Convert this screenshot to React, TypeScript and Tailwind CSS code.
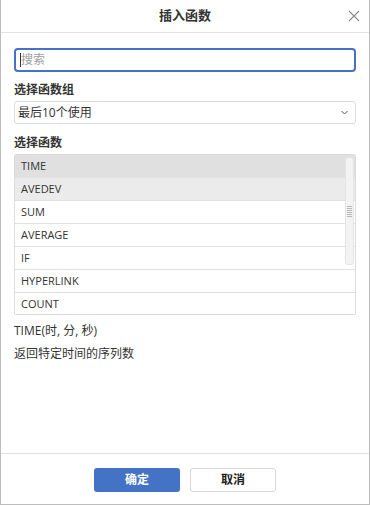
import React from "react";

const items = ["TIME", "AVEDEV", "SUM", "AVERAGE", "IF", "HYPERLINK", "COUNT"];

export default function App() {
  return (
    <div
      className="w-[370px] h-[505px] bg-white border-x border-b border-[#bdbdbd] flex flex-col text-[#333]"
      style={{ fontFamily: '"Open Sans", "Noto Sans", "Noto Sans CJK SC", sans-serif' }}
    >
      <div className="h-[33px] shrink-0 border-b border-[#e3e3e3] flex items-center justify-center relative">
        <span className="text-[13px] font-bold text-[#333]">插入函数</span>
        <svg className="absolute left-[347px] top-[10px]" width="12" height="12" viewBox="0 0 12 12">
          <path d="M1 1L11 11M11 1L1 11" stroke="#8a8a8a" strokeWidth="1.1" />
        </svg>
      </div>
      <div className="flex-1 px-[13px] pt-[15px] flex flex-col">
        <div className="h-[24px] border-2 border-[#4472c4] rounded-[4px] flex items-center pl-[4px]">
          <span className="w-px h-[14px] bg-[#333]" />
          <span className="text-[12px] text-[#a0a0a0]">搜索</span>
        </div>
        <div className="mt-[10px] text-[12px] font-bold leading-[16px]">选择函数组</div>
        <div className="mt-[3px] h-[23px] border border-[#dcdcdc] rounded-[3px] flex items-center justify-between pl-[3px] pr-[7px]">
          <span className="text-[12px]">最后10个使用</span>
          <svg width="7" height="5" viewBox="0 0 7 5">
            <path d="M0.5 1L3.5 4L6.5 1" stroke="#555" strokeWidth="1" fill="none" />
          </svg>
        </div>
        <div className="mt-[11px] text-[12px] font-bold leading-[16px]">选择函数</div>
        <div className="mt-[3px] h-[161px] border border-[#dcdcdc] rounded-[2px] relative overflow-hidden">
          {items.map((it, i) => (
            <div
              key={it}
              className={
                "h-[23px] flex items-center pl-[6px] text-[11px] border-b border-[#e2e2e2] " +
                (i === 0 ? "bg-[#e0e0e0]" : i === 1 ? "bg-[#ebebeb]" : "bg-white")
              }
            >
              {it}
            </div>
          ))}
          <div className="absolute left-[330px] top-[2px] w-[9px] h-[108px] bg-[#f3f3f3] border border-[#e4e4e4] rounded-[3px] flex flex-col items-center justify-center gap-[1px]">
            {[0, 1, 2, 3, 4, 5].map((k) => (
              <span key={k} className="w-[5px] h-px bg-[#b8b8b8]" />
            ))}
          </div>
        </div>
        <div className="mt-[8px] text-[12px] leading-[16px]">TIME(时, 分, 秒)</div>
        <div className="mt-[7px] text-[12px] leading-[16px]">返回特定时间的序列数</div>
      </div>
      <div className="h-[51px] shrink-0 border-t border-[#e3e3e3] flex justify-center items-start pt-[14px] gap-[10px]">
        <div className="w-[86px] h-[24px] bg-[#4472c4] rounded-[3px] flex items-center justify-center text-white text-[12px] font-bold">
          确定
        </div>
        <div className="w-[86px] h-[24px] bg-white border border-[#d8d8d8] rounded-[3px] flex items-center justify-center text-[#222] text-[12px] font-bold">
          取消
        </div>
      </div>
    </div>
  );
}
